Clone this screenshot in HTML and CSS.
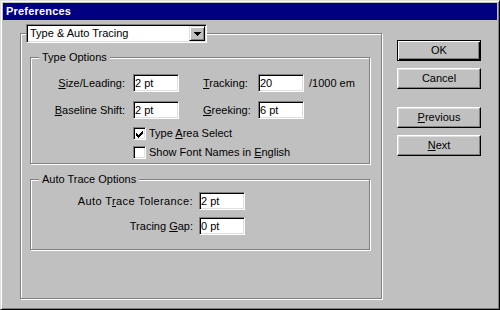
FILE: index.html
```html
<!DOCTYPE html>
<html>
<head>
<meta charset="utf-8">
<title>Preferences</title>
<link rel="stylesheet" href="styles.css">
</head>
<body>
<div class="window">
  <div class="titlebar">Preferences</div>
  <div class="body">
    <fieldset class="panel">
      <legend class="panel-legend">
        <div class="select">
          <span class="select-text">Type &amp; Auto Tracing</span>
          <span class="select-btn"><svg class="arrow" width="7" height="4" viewBox="0 0 7 4"><path d="M0 0h7v1H0zM1 1h5v1H1zM2 2h3v1H2zM3 3h1v1H3z" fill="#000"/></svg></span>
        </div>
      </legend>
      <div class="panel-inner">
        <fieldset class="group group-type">
          <legend class="group-legend">Type Options</legend>
          <div class="type-row">
            <span class="lbl lbl-r"><u>S</u>ize/Leading:</span>
            <span class="cell"><span class="field">2 pt</span></span>
            <span class="lbl"><u>T</u>racking:</span>
            <span class="cell"><span class="field">20</span></span>
            <span class="unit">/1000 em</span>
          </div>
          <div class="type-row row-next">
            <span class="lbl lbl-r"><u>B</u>aseline Shift:</span>
            <span class="cell"><span class="field">2 pt</span></span>
            <span class="lbl"><u>G</u>reeking:</span>
            <span class="cell"><span class="field">6 pt</span></span>
            <span class="unit"></span>
          </div>
          <div class="check-row check-first">
            <span class="checkbox"><svg width="9" height="9" viewBox="0 0 9 9"><path d="M1 4h1v3H1zM2 5h1v3H2zM3 6h1v3H3zM4 5h1v3H4zM5 4h1v3H5zM6 3h1v3H6zM7 2h1v3H7z" fill="#000"/></svg></span>
            <span class="check-text">Type <u>A</u>rea Select</span>
          </div>
          <div class="check-row check-second">
            <span class="checkbox"></span>
            <span class="check-text">Show Font Names in <u>E</u>nglish</span>
          </div>
        </fieldset>
        <fieldset class="group group-trace">
          <legend class="group-legend">Auto Trace Options</legend>
          <div class="trace-row">
            <span class="lbl lbl-r lbl-wide">Auto T<u>r</u>ace Tolerance:</span>
            <span class="field">2 pt</span>
          </div>
          <div class="trace-row trace-next">
            <span class="lbl lbl-r">Tracing <u>G</u>ap:</span>
            <span class="field">0 pt</span>
          </div>
        </fieldset>
      </div>
    </fieldset>
    <div class="buttons">
      <div class="btn btn-default">OK</div>
      <div class="btn btn-gap">Cancel</div>
      <div class="btn btn-group">
        <span><u>P</u>revious</span>
      </div>
      <div class="btn btn-gap"><span><u>N</u>ext</span></div>
    </div>
  </div>
</div>
</body>
</html>
```

FILE: styles.css
```css
* {
  box-sizing: border-box;
}

html,
body {
  margin: 0;
  padding: 0;
}

body {
  width: 500px;
  height: 310px;
  overflow: hidden;
  background: #c0c0c0;
  font-family: "Liberation Sans", Arial, sans-serif;
  font-size: 11px;
  color: #000;
}

u {
  text-decoration: underline;
  text-underline-offset: 1px;
}

.window {
  width: 500px;
  height: 310px;
  padding: 2px;
  background: #c0c0c0;
  border: 1px solid;
  border-color: #dfdfdf #000 #000 #dfdfdf;
  box-shadow: inset 1px 1px #fff, inset -1px -1px #808080;
}

.titlebar {
  height: 17px;
  padding-left: 3px;
  background: #000080;
  color: #fff;
  font-weight: bold;
  letter-spacing: 0.2px;
  line-height: 17px;
}

.body {
  display: flex;
  align-items: flex-start;
  padding-left: 17px;
}

fieldset {
  margin: 0;
  padding: 0;
  min-width: 0;
  border: 1px solid #808080;
  box-shadow: inset 1px 1px #fff, 1px 1px #fff;
}

legend {
  padding: 0;
}

.panel {
  width: 362px;
  margin-top: 4px;
}

.panel-legend {
  margin-left: 5px;
}

.select {
  width: 181px;
  height: 19px;
  display: flex;
  align-items: center;
  justify-content: space-between;
  padding-left: 3px;
  background: #fff;
  border: 1px solid;
  border-color: #808080 #fff #fff #808080;
  box-shadow: inset 1px 1px #000, inset -1px -1px #dfdfdf;
}

.select-text {
  line-height: 13px;
}

.select-btn {
  width: 16px;
  height: 15px;
  margin-right: 1px;
  display: flex;
  align-items: center;
  justify-content: center;
  background: #c0c0c0;
  border: 1px solid;
  border-color: #dfdfdf #000 #000 #dfdfdf;
  box-shadow: inset 1px 1px #fff, inset -1px -1px #808080;
}

.arrow {
  display: block;
}

.panel-inner {
  padding: 8px 11px 48px 9px;
}

.group {
  width: 340px;
}

.group-legend {
  margin-left: 8px;
  padding: 0 3px;
  line-height: 13px;
  background: #c0c0c0;
}

.group-type {
  padding: 10px 0 4px 0;
}

.group-trace {
  margin-top: 9px;
  padding: 6px 0 14px 0;
}

.type-row {
  display: grid;
  grid-template-columns: 102px 70px 55px 51px auto;
  align-items: center;
  height: 18px;
}

.row-next {
  margin-top: 9px;
}

.lbl {
  white-space: nowrap;
  line-height: 13px;
}

.lbl-r {
  text-align: right;
  padding-right: 8px;
}

.lbl-wide {
  letter-spacing: 0.4px;
}

.cell {
  display: flex;
}

.field {
  display: block;
  width: 46px;
  height: 18px;
  padding-left: 1px;
  background: #fff;
  line-height: 16px;
  border: 1px solid;
  border-color: #808080 #fff #fff #808080;
  box-shadow: inset 1px 1px #000, inset -1px -1px #dfdfdf;
  white-space: nowrap;
}

.unit {
  white-space: nowrap;
}

.check-row {
  display: flex;
  align-items: center;
  height: 13px;
  margin-left: 102px;
  gap: 3px;
}

.check-first {
  margin-top: 8px;
}

.check-second {
  margin-top: 6px;
}

.checkbox {
  width: 13px;
  height: 13px;
  flex: none;
  padding: 1px;
  background: #fff;
  border: 1px solid;
  border-color: #808080 #fff #fff #808080;
  box-shadow: inset 1px 1px #000, inset -1px -1px #dfdfdf;
}

.checkbox svg {
  display: block;
}

.check-text {
  white-space: nowrap;
  line-height: 13px;
}

.trace-row {
  display: grid;
  grid-template-columns: 168px 46px;
  align-items: center;
  height: 18px;
}

.trace-row .lbl-r {
  padding-right: 6px;
}

.trace-next {
  margin-top: 7px;
}

.buttons {
  width: 84px;
  margin-left: 15px;
  margin-top: 20px;
  display: flex;
  flex-direction: column;
}

.btn {
  width: 84px;
  height: 21px;
  text-align: center;
  line-height: 19px;
  border: 1px solid;
  border-color: #fff #000 #000 #fff;
  box-shadow: inset -1px -1px #808080, inset 1px 1px #dfdfdf;
}

.btn-default {
  border-color: #000;
  box-shadow: inset 1px 1px #fff, inset -1px -1px #000, inset -2px -2px #808080;
}

.btn-gap {
  margin-top: 7px;
}

.btn-group {
  margin-top: 18px;
}
```
